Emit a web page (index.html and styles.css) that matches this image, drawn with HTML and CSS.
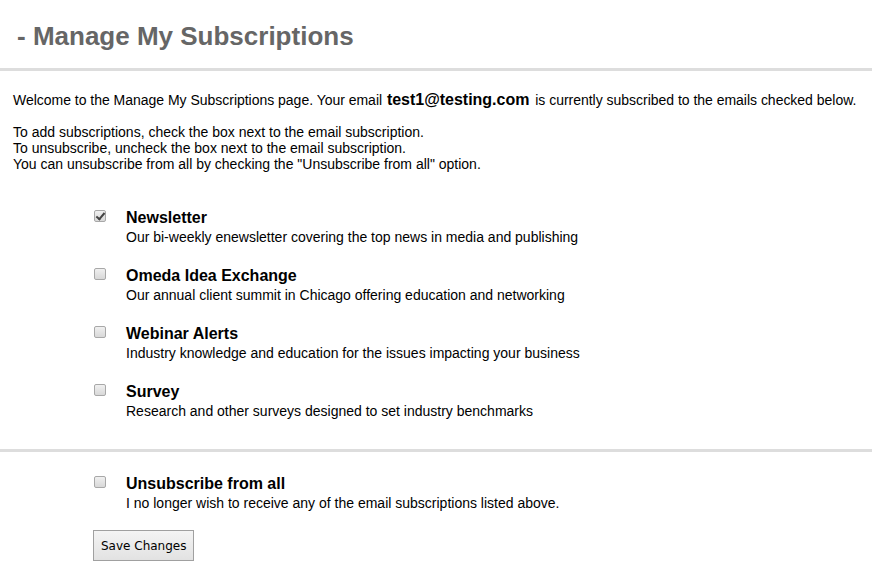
FILE: index.html
```html
<!DOCTYPE html>
<html>
<head>
<meta charset="utf-8">
<link rel="stylesheet" href="styles.css">
</head>
<body>
<header class="page-header">
  <h1 class="page-title">- Manage My Subscriptions</h1>
</header>
<section class="intro">
  <p class="intro-line">Welcome to the Manage My Subscriptions page. Your email <span class="email">test1@testing.com</span> is currently subscribed to the emails checked below.</p>
  <p class="intro-block">To add subscriptions, check the box next to the email subscription.<br>To unsubscribe, uncheck the box next to the email subscription.<br>You can unsubscribe from all by checking the "Unsubscribe from all" option.</p>
</section>
<form class="subs">
  <ul class="sub-list">
    <li class="sub-item">
      <input type="checkbox" class="cb" checked>
      <div class="sub-text">
        <div class="sub-title">Newsletter</div>
        <div class="sub-desc">Our bi-weekly enewsletter covering the top news in media and publishing</div>
      </div>
    </li>
    <li class="sub-item">
      <input type="checkbox" class="cb">
      <div class="sub-text">
        <div class="sub-title">Omeda Idea Exchange</div>
        <div class="sub-desc">Our annual client summit in Chicago offering education and networking</div>
      </div>
    </li>
    <li class="sub-item">
      <input type="checkbox" class="cb">
      <div class="sub-text">
        <div class="sub-title">Webinar Alerts</div>
        <div class="sub-desc">Industry knowledge and education for the issues impacting your business</div>
      </div>
    </li>
    <li class="sub-item">
      <input type="checkbox" class="cb">
      <div class="sub-text">
        <div class="sub-title">Survey</div>
        <div class="sub-desc">Research and other surveys designed to set industry benchmarks</div>
      </div>
    </li>
  </ul>
  <div class="unsub">
    <div class="sub-item">
      <input type="checkbox" class="cb">
      <div class="sub-text">
        <div class="sub-title">Unsubscribe from all</div>
        <div class="sub-desc">I no longer wish to receive any of the email subscriptions listed above.</div>
      </div>
    </div>
    <button type="button" class="save-btn">Save Changes</button>
  </div>
</form>
</body>
</html>
```
FILE: styles.css
```css
html, body {
  margin: 0;
  padding: 0;
  background: #fff;
}
body {
  font-family: "Liberation Sans", Arial, sans-serif;
  color: #000;
}
.page-header {
  height: 68px;
  border-bottom: 3px solid #dddddd;
  box-sizing: content-box;
  display: flex;
  align-items: flex-start;
}
.page-title {
  margin: 0;
  padding: 20px 0 0 17px;
  font-size: 26px;
  line-height: 32px;
  font-weight: bold;
  color: #666666;
}
.intro {
  padding: 20px 0 0 13px;
  font-size: 14px;
}
.intro-line {
  margin: 0;
  line-height: 18px;
  white-space: nowrap;
  letter-spacing: -0.02px;
}
.email {
  font-weight: bold;
  font-size: 16px;
  margin: 0 2px 0 1px;
}
.intro-block {
  margin: 15px 0 0 0;
  line-height: 16px;
}
.subs {
  margin: 0;
}
.sub-list {
  list-style: none;
  margin: 0;
  padding: 36px 0 0 94px;
}
.sub-item {
  display: flex;
  align-items: flex-start;
  margin-bottom: 20px;
}
.sub-list .sub-item:last-child {
  margin-bottom: 29px;
}
.cb {
  appearance: none;
  -webkit-appearance: none;
  width: 12px;
  height: 12px;
  margin: 2px 20px 0 0;
  border: 1px solid #a8a8a8;
  border-radius: 2px;
  background: linear-gradient(#f0f0f0, #d8d8d8);
  flex: none;
  position: relative;
}
.cb:checked::after {
  content: "";
  position: absolute;
  left: 3px;
  top: 0px;
  width: 3px;
  height: 7px;
  border: solid #444;
  border-width: 0 2px 2px 0;
  transform: rotate(40deg);
}
.sub-title {
  font-size: 16px;
  line-height: 20px;
  font-weight: bold;
}
.sub-desc {
  font-size: 14px;
  line-height: 18px;
}
.unsub {
  border-top: 3px solid #dddddd;
  padding: 22px 0 0 94px;
}
.unsub .sub-item {
  margin-bottom: 18px;
}
.save-btn {
  margin-left: -1px;
  height: 31px;
  padding: 0 7px;
  font-family: "DejaVu Sans", Tahoma, sans-serif;
  font-size: 12px;
  color: #000;
  background: linear-gradient(#f4f4f4, #e2e2e2);
  border: 1px solid #a0a0a0;
  border-radius: 0;
}
```
